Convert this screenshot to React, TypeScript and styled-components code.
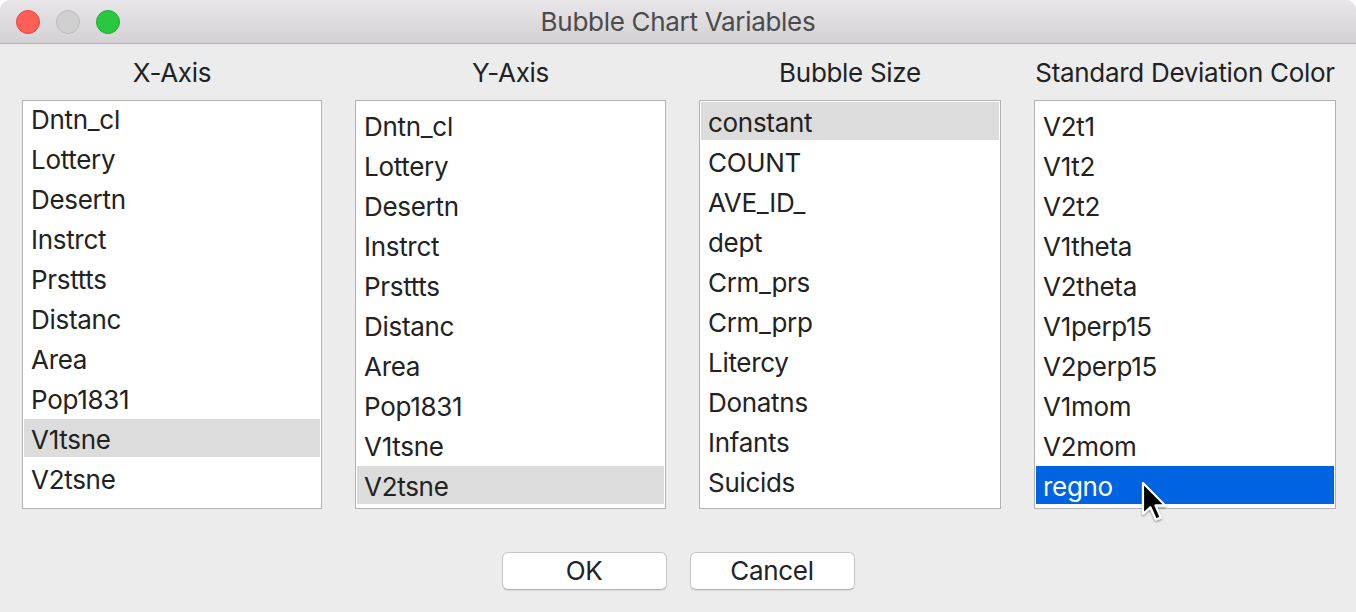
import React from "react";
import styled, { createGlobalStyle } from "styled-components";

const Global = createGlobalStyle`
  html, body { margin: 0; padding: 0; background: #ffffff; }
  body { font-family: Inter, "Noto Sans", "Liberation Sans", sans-serif; }
  * { box-sizing: border-box; }
`;

const Window = styled.div`
  width: 1356px;
  height: 612px;
  background: #ececec;
  border-radius: 10px 10px 0 0;
  overflow: hidden;
  display: flex;
  flex-direction: column;
  font-family: Inter, "Noto Sans", "Liberation Sans", sans-serif;
  color: #222222;
  letter-spacing: -0.3px;
`;

const TitleBar = styled.div`
  height: 44px;
  flex: none;
  display: grid;
  grid-template-columns: 1fr auto 1fr;
  align-items: center;
  background: linear-gradient(#e8e6e8, #d3d1d3);
  border-bottom: 1px solid #b5b5b5;
`;

const Lights = styled.div`
  display: flex;
  gap: 16px;
  padding-left: 16px;
  padding-top: 1px;
`;

const Light = styled.span<{ $fill: string; $edge: string }>`
  width: 24px;
  height: 24px;
  border-radius: 50%;
  background: ${(p) => p.$fill};
  border: 1px solid ${(p) => p.$edge};
`;

const Title = styled.div`
  font-size: 26px;
  color: #4b4b4b;
  line-height: 30px;
  padding-top: 1px;
`;

const Body = styled.div`
  flex: 1;
  display: flex;
  flex-direction: column;
  padding: 14px 21px 22px 22px;
`;

const Columns = styled.div`
  display: grid;
  grid-template-columns: 300px 311px 302px 302px;
  column-gap: 33px;
`;

const Column = styled.div`
  display: flex;
  flex-direction: column;
  align-items: stretch;
  gap: 12px;
`;

const Heading = styled.div`
  font-size: 26px;
  line-height: 30px;
  text-align: center;
  white-space: nowrap;
  color: #222222;
`;

const ListFrame = styled.div`
  position: relative;
`;

const ListBox = styled.div`
  height: 409px;
  background: #ffffff;
  border: 1px solid #b3b3b3;
  padding: 0 1px;
  overflow: hidden;
`;

const ListInner = styled.div<{ $scroll: number }>`
  display: flex;
  flex-direction: column;
  margin-top: ${(p) => p.$scroll}px;
`;

const Row = styled.div<{ $state?: "none" | "gray" | "blue" }>`
  height: 40px;
  padding: 2px 0 0 7px;
  line-height: 38px;
  font-size: 26px;
  white-space: nowrap;
  color: ${(p) => (p.$state === "blue" ? "#ffffff" : "#222222")};
  background-image: ${(p) =>
    p.$state === "gray"
      ? "linear-gradient(#dcdcdc, #dcdcdc)"
      : p.$state === "blue"
      ? "linear-gradient(#0063e1, #0063e1)"
      : "none"};
  background-size: 100% 38px;
  background-repeat: no-repeat;
  background-position: 0 0;
`;

const Cursor = styled.svg`
  position: absolute;
  left: 106px;
  top: 380px;
  overflow: visible;
`;

const Buttons = styled.div`
  display: flex;
  justify-content: center;
  gap: 23px;
  margin-top: 43px;
  padding-right: 1px;
`;

const Button = styled.button`
  width: 165px;
  height: 38px;
  border-radius: 6px;
  background: #ffffff;
  border: 1px solid #c6c6c6;
  border-bottom-color: #b4b4b4;
  box-shadow: 0 1px 1px rgba(0, 0, 0, 0.08);
  font-family: Inter, "Noto Sans", "Liberation Sans", sans-serif;
  font-size: 26px;
  letter-spacing: -0.3px;
  color: #222222;
  padding: 0;
  line-height: 34px;
`;

type Col = {
  title: string;
  scroll: number;
  items: string[];
  selected: number;
  tone: "gray" | "blue";
  cursor?: boolean;
};

const columns: Col[] = [
  {
    title: "X-Axis",
    scroll: -2,
    items: ["Dntn_cl", "Lottery", "Desertn", "Instrct", "Prsttts", "Distanc", "Area", "Pop1831", "V1tsne", "V2tsne"],
    selected: 8,
    tone: "gray",
  },
  {
    title: "Y-Axis",
    scroll: 5,
    items: ["Dntn_cl", "Lottery", "Desertn", "Instrct", "Prsttts", "Distanc", "Area", "Pop1831", "V1tsne", "V2tsne"],
    selected: 9,
    tone: "gray",
  },
  {
    title: "Bubble Size",
    scroll: 1,
    items: ["constant", "COUNT", "AVE_ID_", "dept", "Crm_prs", "Crm_prp", "Litercy", "Donatns", "Infants", "Suicids"],
    selected: 0,
    tone: "gray",
  },
  {
    title: "Standard Deviation Color",
    scroll: 5,
    items: ["V2t1", "V1t2", "V2t2", "V1theta", "V2theta", "V1perp15", "V2perp15", "V1mom", "V2mom", "regno"],
    selected: 9,
    tone: "blue",
    cursor: true,
  },
];

const Pointer = () => (
  <Cursor width="30" height="44" viewBox="0 0 15 22">
    <defs>
      <filter id="sh" x="-30%" y="-30%" width="160%" height="160%">
        <feDropShadow dx="0" dy="0.6" stdDeviation="0.6" floodColor="#000" floodOpacity="0.45" />
      </filter>
    </defs>
    <path
      d="M1.5 1.5 L1.5 17 L5.2 13.6 L8 19.8 L10.4 18.8 L7.7 12.7 L12.6 12.7 Z"
      fill="#000"
      stroke="#fff"
      strokeWidth="1.1"
      strokeLinejoin="round"
      filter="url(#sh)"
    />
  </Cursor>
);

export default function App() {
  return (
    <>
      <Global />
      <Window>
        <TitleBar>
          <Lights>
            <Light $fill="#fe5f57" $edge="#e2463f" />
            <Light $fill="#d1d0d1" $edge="#bcbbbc" />
            <Light $fill="#28c840" $edge="#1eab2e" />
          </Lights>
          <Title>Bubble Chart Variables</Title>
          <div />
        </TitleBar>
        <Body>
          <Columns>
            {columns.map((c) => (
              <Column key={c.title}>
                <Heading>{c.title}</Heading>
                <ListFrame>
                  <ListBox>
                    <ListInner $scroll={c.scroll}>
                      {c.items.map((it, i) => (
                        <Row key={it} $state={i === c.selected ? c.tone : "none"}>
                          {it}
                        </Row>
                      ))}
                    </ListInner>
                  </ListBox>
                  {c.cursor && <Pointer />}
                </ListFrame>
              </Column>
            ))}
          </Columns>
          <Buttons>
            <Button>OK</Button>
            <Button>Cancel</Button>
          </Buttons>
        </Body>
      </Window>
    </>
  );
}
